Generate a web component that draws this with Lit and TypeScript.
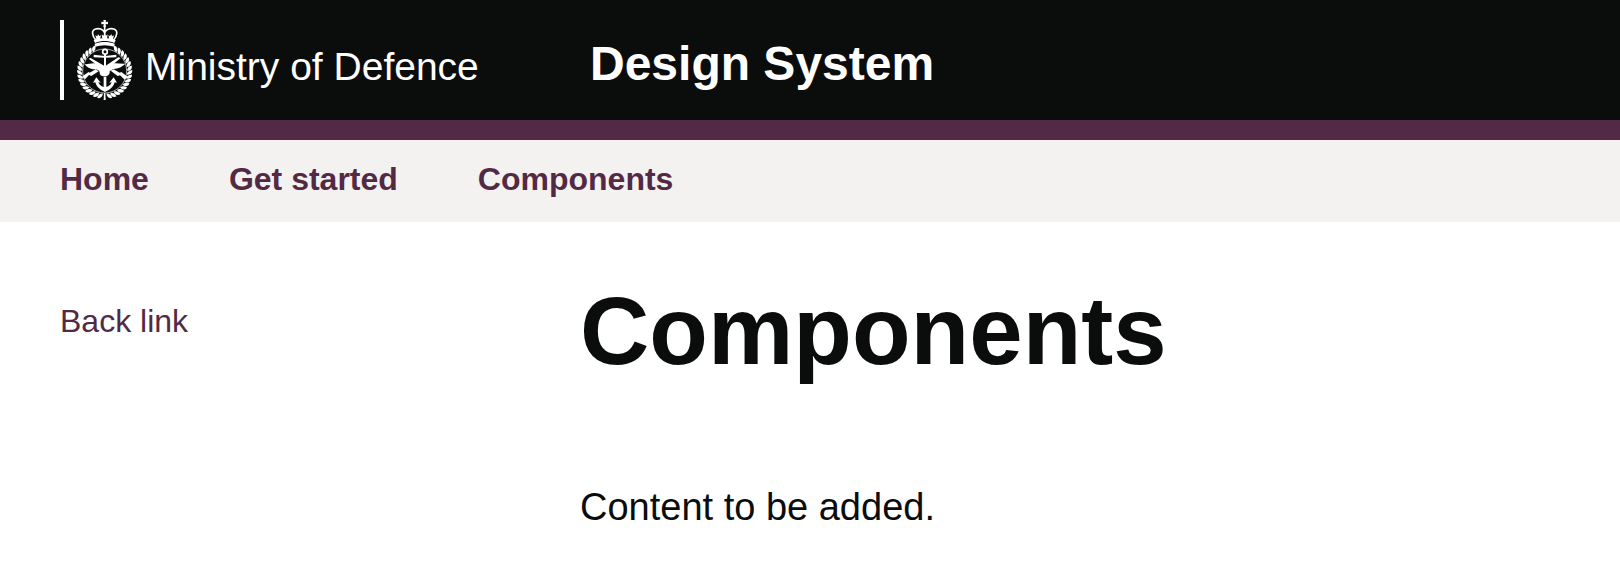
import { LitElement, html, svg, css } from "lit";
import { customElement } from "lit/decorators.js";

const CENTRE_X = 164;
const CENTRE_Y = 184;

// Laurel leaves run from the foot of the wreath up to the crown on both sides.
const leafAngles = Array.from({ length: 16 }, (_, i) => 4 + i * 9.6);

@customElement("mod-crest")
export class ModCrest extends LitElement {
  static styles = css`
    :host {
      display: block;
    }
    .crest {
      display: block;
      width: 57px;
      height: 80px;
    }
  `;

  private wreathSide(flip: boolean) {
    const mirror = flip ? `translate(${CENTRE_X * 2} 0) scale(-1 1)` : "";
    return svg`<g transform=${mirror}>
      ${leafAngles.map(
        (a) => svg`<g transform=${`rotate(${a} ${CENTRE_X} ${CENTRE_Y})`}>
          <path d="M163 251C156 251 149 256 147 265C156 268 164 261 163 251Z" />
        </g>`
      )}
    </g>`;
  }

  render() {
    return html`<svg class="crest" viewBox="78 30 171 240" fill="#fff" aria-hidden="true">
      <path d="M160 30h8l-1 6 7-1v8l-7-1 1 9h-8l1-9-7 1v-8l7 1z" />
      <g fill="none" stroke="#fff">
        <path stroke-width="5" d="M138 91C126 78 123 61 137 57C149 54 160 59 164 68C168 59 179 54 191 57C205 61 202 78 190 91" />
        <path stroke-width="5" d="M164 50V88" />
      </g>
      <path d="M131 91C150 82 178 82 197 91L193 99C173 91 155 91 135 99Z" />
      <path d="M134 101C153 94 175 94 194 101L193 110C174 104 154 104 135 110Z" />
      <path d="M155 73l5 4 4-6 4 6 5-4-2 14h-14zM136 76l6 3 2-7 4 6 5-2-3 12-10 3zM192 76l-6 3-2-7-4 6-5-2 3 12 10 3z" />

      ${this.wreathSide(false)} ${this.wreathSide(true)}
      <circle cx="164" cy="183" r="66" fill="none" stroke="#fff" stroke-width="2" />
      <path d="M162 249h4l1 21h-6z" />

      <circle cx="165" cy="125" r="7" fill="none" stroke="#fff" stroke-width="5" />
      <path d="M131 134L165 138L199 134V142L165 143L131 142Z" />
      <path d="M162 132H168V170H162Z" />
      <path d="M116 146L122 144L165 169L205 142L212 144L169 180H160Z" />
      <path d="M104 163C117 164 130 156 143 163L163 176L181 164C194 156 211 163 226 161C217 170 206 176 190 177L179 184C180 194 174 199 164 199C153 199 148 193 149 185C144 178 138 178 129 178C118 176 109 171 104 163Z" />
      <path d="M137 178L146 184L124 198L117 195L105 208L97 199L116 186L119 188Z" />
      <path d="M191 178L182 182L203 198L210 196L224 209L233 200L214 186L209 188Z" />
      <path d="M161 200H169V231C177 229 182 225 185 217L178 218L191 202L201 218L194 217C190 232 179 239 165 246C151 239 140 232 136 217L129 218L139 202L152 218L145 217C148 225 153 229 161 231Z" />
    </svg>`;
  }
}

@customElement("app-root")
export class AppRoot extends LitElement {
  static styles = css`
    :host {
      display: block;
      font-family: "Liberation Sans", Arial, sans-serif;
      color: #0b0c0c;
      background: #fff;
    }
    a {
      color: inherit;
      text-decoration: none;
    }
    .columns {
      display: grid;
      grid-template-columns: repeat(3, minmax(0, 1fr));
      column-gap: 60px;
      padding: 0 60px;
    }
    .wide {
      grid-column: span 2;
    }
    .header {
      align-items: center;
      padding-top: 20px;
      padding-bottom: 20px;
      background: #0b0c0c;
      border-bottom: 20px solid #532a45;
      color: #fff;
    }
    .brand {
      display: flex;
      align-items: center;
      gap: 12px;
      padding-left: 12px;
      border-left: 4px solid #fff;
    }
    .department {
      padding-top: 14px;
      font-size: 39px;
      line-height: 48px;
      white-space: nowrap;
    }
    .product {
      padding: 8px 0 0 10px;
      font-size: 48px;
      line-height: 48px;
      font-weight: 700;
    }
    .nav {
      background: #f3f2f1;
      color: #532a45;
    }
    .nav-list {
      display: flex;
      flex-wrap: wrap;
      gap: 0 80px;
      margin: 0;
      padding: 19px 60px 23px;
      list-style: none;
      font-size: 32px;
      line-height: 40px;
      font-weight: 700;
    }
    .main {
      padding-top: 59px;
      padding-bottom: 40px;
    }
    .back {
      padding-top: 20px;
      font-size: 32px;
      line-height: 40px;
      color: #532a45;
    }
    .title {
      margin: 0 0 101px;
      font-size: 96px;
      line-height: 100px;
      font-weight: 700;
    }
    .body {
      margin: 0;
      font-size: 38px;
      line-height: 50px;
    }
  `;

  render() {
    return html`
      <header class="header columns">
        <a class="brand" href="#">
          <mod-crest></mod-crest>
          <span class="department">Ministry of Defence</span>
        </a>
        <a class="product wide" href="#">Design System</a>
      </header>
      <nav class="nav" aria-label="Main">
        <ul class="nav-list">
          <li><a href="#">Home</a></li>
          <li><a href="#">Get started</a></li>
          <li><a href="#">Components</a></li>
        </ul>
      </nav>
      <main class="main columns">
        <div class="back"><a href="#">Back link</a></div>
        <div class="wide">
          <h1 class="title">Components</h1>
          <p class="body">Content to be added.</p>
        </div>
      </main>
    `;
  }
}
